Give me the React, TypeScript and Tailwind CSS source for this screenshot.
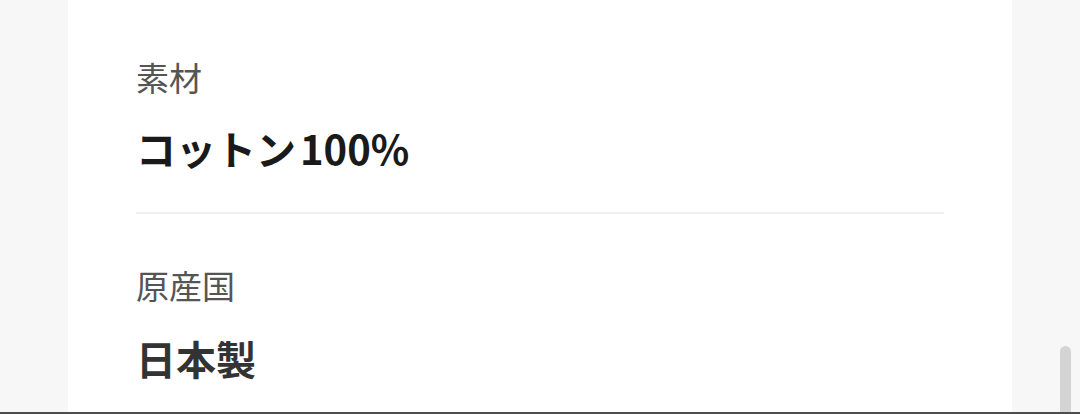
export default function App() {
  const font = { fontFamily: '"Noto Sans CJK JP", "Noto Sans", sans-serif' };
  return (
    <div className="relative flex h-[414px] w-[1080px] flex-col overflow-hidden bg-[#f7f7f7]" style={font}>
      <div className="flex flex-1 overflow-hidden px-[68px]">
        {/* Spec card */}
        <div className="flex-1 bg-white px-[68px] pt-[55px]">
          <div className="flex flex-col border-b-2 border-[#efefef] pb-[38px]">
            <div className="text-[33px] leading-[44px] text-[#555555]">素材</div>
            <div className="mt-[23px] text-[40px] font-semibold leading-[52px] text-[#1a1a1a]">
              コットン<span className="ml-[4px]">100%</span>
            </div>
          </div>
          <div className="flex flex-col pt-[49px]">
            <div className="text-[33px] leading-[44px] text-[#555555]">原産国</div>
            <div className="mt-[25px] text-[40px] font-semibold leading-[52px] text-[#333333]">日本製</div>
          </div>
        </div>
      </div>
      <div className="h-[2px] bg-[#4d4d4d]" />
      {/* scrollbar thumb */}
      <div className="absolute bottom-[2px] left-[1060px] h-[66px] w-[11px] rounded-t-full bg-[#d4d4d4]" />
    </div>
  );
}
